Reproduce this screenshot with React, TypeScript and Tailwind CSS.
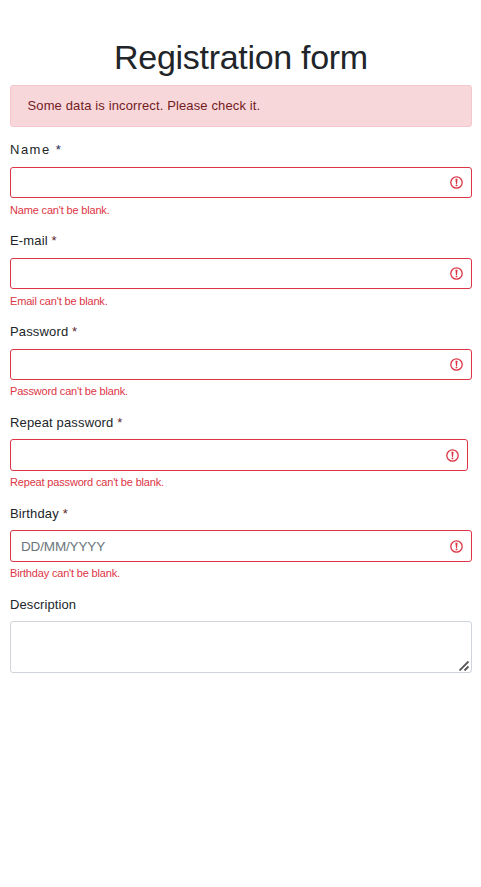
import React from "react";

type FieldProps = {
  label: string;
  error: string;
  placeholder?: string;
  labelClass?: string;
  inputClass?: string;
  starClass?: string;
};

function ErrorIcon() {
  return (
    <svg className="h-[13px] w-[13px]" viewBox="0 0 13 13" fill="none">
      <circle cx="6.5" cy="6.5" r="5.7" stroke="#dc3545" strokeWidth="1.3" />
      <path d="M5.4 2.8h2.2L7 7.9H6z" fill="#dc3545" />
      <circle cx="6.5" cy="9.4" r="0.95" fill="#dc3545" />
    </svg>
  );
}

function Field({
  label,
  error,
  placeholder,
  labelClass = "tracking-[0.15px]",
  inputClass = "",
  starClass = "text-[#5c2a2e]",
}: FieldProps) {
  return (
    <div className="flex h-[90.8px] flex-col">
      <label className={`h-[27px] shrink-0 pt-[0.4px] text-[13px] leading-5 ${labelClass}`}>
        {label} <span className={starClass}>*</span>
      </label>
      <div className={`flex h-[31.4px] shrink-0 items-center justify-between rounded-[3px] border border-[#dc3545] pr-2 pl-[10px] ${inputClass}`}>
        <span className="pt-px text-[13.5px] tracking-[-0.15px] text-[#6c757d]">{placeholder}</span>
        <ErrorIcon />
      </div>
      <p className="mt-[3.4px] text-[11px] leading-4 tracking-[-0.17px] text-[#dc3545]">{error}</p>
    </div>
  );
}

export default function App() {
  return (
    <main className="h-[887px] w-[481px] bg-white pt-[37px] pr-[9px] pl-[10px] font-['Liberation_Sans',Arial,sans-serif] text-[#212529]">
      <h1 className="text-center text-[34px] leading-[40px] tracking-[-0.3px]">Registration form</h1>
      <div className="mt-[8px] flex h-[42px] items-center rounded-[3px] border border-[#f5c6cb] bg-[#f8d7da] pl-[16.5px] text-[13px] tracking-[0.13px] text-[#721c24]">
        Some data is incorrect. Please check it.
      </div>
      <form className="mt-[13px]">
        <Field label="Name" error="Name can't be blank." labelClass="tracking-[1.5px]" starClass="text-[#212550]" />
        <Field label="E-mail" error="Email can't be blank." />
        <Field label="Password" error="Password can't be blank." />
        <Field label="Repeat password" error="Repeat password can't be blank." inputClass="mr-1" />
        <Field label="Birthday" error="Birthday can't be blank." placeholder="DD/MM/YYYY" inputClass="pt-[0.8px]" />
        <label className="block h-[27px] pt-px text-[13px] leading-5 tracking-[0.1px]">Description</label>
        <div className="flex h-[52px] items-end justify-end rounded-[3px] border border-[#ced4da] p-[2px] pb-px">
          <svg className="h-[10px] w-[10px]" viewBox="0 0 10 10" stroke="#555" strokeWidth="1.9">
            <path d="M0.5 9.5L9.5 0.5M5.5 9.5l4-4" />
          </svg>
        </div>
      </form>
    </main>
  );
}
